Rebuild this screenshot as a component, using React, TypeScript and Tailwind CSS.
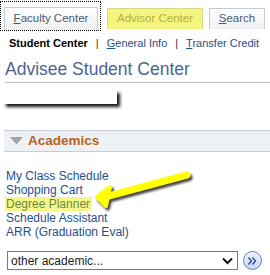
import React from "react";

export default function App() {
  return (
    <div className="relative w-[270px] h-[275px] overflow-hidden bg-white font-['Liberation_Sans',Arial,sans-serif]">
      {/* Tabs */}
      <div className="flex items-start pt-[1px]">
        <div className="w-[101px] h-[30px] border border-dotted border-black pl-[3px] pt-[5px]">
          <div className="w-[94px] h-[23px] border border-b-0 border-[#c3c9d1] bg-gradient-to-b from-white to-[#eef0f3] flex items-center justify-center text-[11.5px] text-[#4b5a6e]">
            <span><span className="underline">F</span>aculty Center</span>
          </div>
        </div>
        <div className="ml-[6px] mt-[7px] w-[96px] h-[21px] border border-b-0 border-[#d6d98a] bg-[#f4f57e] flex items-center justify-center text-[11.5px] text-[#b2b040]">
          Advisor Center
        </div>
        <div className="ml-[6px] mt-[7px] w-[56px] h-[21px] border border-b-0 border-[#c3c9d1] bg-gradient-to-b from-white to-[#eef0f3] flex items-center justify-center text-[11.5px] text-[#4b5a6e]">
          <span><span className="underline">S</span>earch</span>
        </div>
      </div>

      {/* Sub nav */}
      <div className="flex items-center gap-[8px] pl-[9px] mt-[6px] h-[13px] text-[11px] leading-[13px]">
        <span className="font-bold text-black">Student Center</span>
        <span className="text-[#333]">|</span>
        <span className="text-[#1f4e8c]"><span className="underline">G</span>eneral Info</span>
        <span className="text-[#333]">|</span>
        <span className="text-[#1f4e8c]"><span className="underline">T</span>ransfer Credit</span>
      </div>

      {/* Title */}
      <div className="ml-[5px] mt-[8px] h-[25px] border-b border-[#bfbfbf] text-[17.5px] leading-[22px] text-[#4a6591]">
        Advisee Student Center
      </div>

      {/* Redacted */}
      <div className="ml-[3px] mt-[7px] w-[114px] h-[14px] bg-white shadow-[3px_3px_3px_rgba(0,0,0,0.9)]" />

      {/* Academics header */}
      <div className="ml-[4px] mt-[26px] h-[22px] border-t border-b border-[#c9cdd3] bg-[#eef1f3] flex items-center pl-[6px]">
        <svg width="13" height="8" viewBox="0 0 13 8" className="mr-[5px]">
          <polygon points="0,0 13,0 6.5,7.5" fill="#a0a4a8" />
        </svg>
        <span className="text-[13.5px] font-bold text-[#b5651d]">Academics</span>
      </div>

      {/* Links */}
      <div className="ml-[6px] mt-[17px] flex flex-col text-[12px] leading-[14px] text-[#1d4f91]">
        <span>My Class Schedule</span>
        <span>Shopping Cart</span>
        <span className="self-start -ml-[1px] pl-[1px] pr-[2px] bg-[#f6f78a] text-[#6f8a3a]">Degree Planner</span>
        <span>Schedule Assistant</span>
        <span>ARR (Graduation Eval)</span>
      </div>

      {/* Select row */}
      <div className="ml-[7px] mt-[12px] flex items-center">
        <div className="w-[231px] h-[19px] border border-[#7a7a7a] flex items-center justify-between pl-[3px] pr-[4px] text-[12px] text-[#222]">
          <span>other academic...</span>
          <svg width="11" height="8" viewBox="0 0 11 8">
            <polyline points="1,1.5 5.5,6 10,1.5" fill="none" stroke="#111" strokeWidth="2" />
          </svg>
        </div>
        <div className="ml-[5px] w-[19px] h-[19px] rounded-full border border-[#6a7fb8] bg-gradient-to-b from-[#eef2fb] to-[#cdd6ee] flex items-center justify-center">
          <svg width="11" height="10" viewBox="0 0 11 10">
            <polyline points="1.5,1.5 4.5,5 1.5,8.5" fill="none" stroke="#2a4b9a" strokeWidth="1.4" />
            <polyline points="5.5,1.5 8.5,5 5.5,8.5" fill="none" stroke="#2a4b9a" strokeWidth="1.4" />
          </svg>
        </div>
      </div>

      {/* Arrow overlay */}
      <svg className="absolute left-0 top-0 pointer-events-none" width="270" height="275" viewBox="0 0 270 275">
        <defs>
          <filter id="sh" x="-20%" y="-50%" width="140%" height="200%">
            <feGaussianBlur stdDeviation="1.2" />
          </filter>
        </defs>
        <g transform="translate(2,2.5)" filter="url(#sh)" opacity="0.85">
          <line x1="187" y1="175" x2="105" y2="197" stroke="#222" strokeWidth="7" strokeLinecap="round" />
          <polygon points="110,187 97,197 106,206" fill="#222" stroke="#222" strokeWidth="4" strokeLinejoin="round" />
        </g>
        <line x1="187" y1="175" x2="105" y2="197" stroke="#ffff00" strokeWidth="7" strokeLinecap="round" />
        <polygon points="110,187 97,197 106,206" fill="#ffff00" stroke="#ffff00" strokeWidth="4" strokeLinejoin="round" />
      </svg>
    </div>
  );
}
